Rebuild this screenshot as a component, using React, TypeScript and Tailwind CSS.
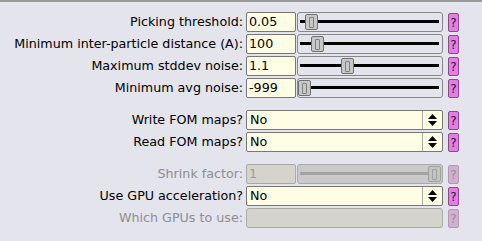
type SliderRow = { label: string; value: string; pos: number };

const sliders: SliderRow[] = [
  { label: "Picking threshold:", value: "0.05", pos: 7 },
  { label: "Minimum inter-particle distance (A):", value: "100", pos: 13 },
  { label: "Maximum stddev noise:", value: "1.1", pos: 43 },
  { label: "Minimum avg noise:", value: "-999", pos: 0 },
];

const font = { fontFamily: '"DejaVu Sans", sans-serif' };

// ヘルプボタン
const Help = ({ disabled = false }: { disabled?: boolean }) => (
  <div
    className={`ml-[5px] w-[11px] h-[19px] mt-[1px] rounded-[2px] border flex items-center justify-center text-[12px] leading-none ${
      disabled ? "bg-[#cfb0cf] border-[#b49ab4] text-[#9a8a9a]" : "bg-[#e77ce7] border-[#8a4a8a] text-[#1a1a3a]"
    }`}
  >
    ?
  </div>
);

const Label = ({ text, disabled = false }: { text: string; disabled?: boolean }) => (
  <div className={`w-[246px] pr-[3px] text-right text-[12.7px] ${disabled ? "text-[#8e8e8e]" : "text-black"}`}>{text}</div>
);

const Knob = ({ left, disabled = false }: { left: number; disabled?: boolean }) => (
  <div
    className={`absolute top-[1px] w-[13px] h-[16px] rounded-[2px] border flex items-center justify-center ${
      disabled ? "bg-[#c4c4c4] border-[#a0a0a0]" : "bg-[#c8c8c8] border-[#707070]"
    }`}
    style={{ left }}
  >
    <div className={`w-[5px] h-[11px] rounded-[1px] border ${disabled ? "border-[#a0a0a0]" : "border-[#808080]"}`} />
  </div>
);

const Slider = ({ row }: { row: SliderRow }) => (
  <div className="flex items-center h-[20px]">
    <Label text={row.label} />
    <div className="w-[50px] h-[20px] bg-[#fffee4] border border-[#777] rounded-[2px] px-[2px] text-[12.7px] leading-[18px]">
      {row.value}
    </div>
    <div className="relative ml-[1px] w-[146px] h-[20px] border border-[#888] rounded-[3px] bg-[#e4e4ec]">
      <div className="absolute left-[2px] right-[3px] top-[7px] h-[3px] bg-black" />
      <Knob left={row.pos} />
    </div>
    <Help />
  </div>
);

const Choice = ({ label, value }: { label: string; value: string }) => (
  <div className="flex items-center h-[20px]">
    <Label text={label} />
    <div className="flex w-[197px] h-[20px] bg-[#fffee4] border border-[#777] rounded-[2px]">
      <div className="flex-1 px-[3px] text-[12.7px] leading-[18px]">{value}</div>
      <div className="w-[20px] border-l border-[#aaa] flex flex-col items-center justify-center gap-[2px]">
        <svg width="9" height="5" viewBox="0 0 9 5"><path d="M0 5 L4.5 0 L9 5 Z" fill="#000" /></svg>
        <svg width="9" height="5" viewBox="0 0 9 5"><path d="M0 0 L4.5 5 L9 0 Z" fill="#000" /></svg>
      </div>
    </div>
    <Help />
  </div>
);

export default function App() {
  return (
    <div className="w-[482px] h-[241px] bg-[#e4e4ec] border-t-2 border-[#9a9a9a] pt-[10px] flex flex-col" style={font}>
      <div className="flex flex-col gap-[2px]">
        {sliders.map((s) => (
          <Slider key={s.label} row={s} />
        ))}
      </div>

      <div className="flex flex-col gap-[2px] mt-[12px]">
        <Choice label="Write FOM maps?" value="No" />
        <Choice label="Read FOM maps?" value="No" />
      </div>

      <div className="flex flex-col gap-[2px] mt-[12px]">
        {/* 無効状態のスライダー */}
        <div className="flex items-center h-[20px]">
          <Label text="Shrink factor:" disabled />
          <div className="w-[50px] h-[20px] bg-[#d4d4cc] border border-[#aaa] rounded-[2px] px-[2px] text-[12.7px] leading-[18px] text-[#9a9a9a]">
            1
          </div>
          <div className="relative ml-[1px] w-[146px] h-[20px] border border-[#aaa] rounded-[3px] bg-[#cacaca]">
            <div className="absolute left-[2px] right-[3px] top-[7px] h-[3px] bg-[#a4a4a4]" />
            <Knob left={130} disabled />
          </div>
          <Help disabled />
        </div>
        <Choice label="Use GPU acceleration?" value="No" />
        <div className="flex items-center h-[20px]">
          <Label text="Which GPUs to use:" disabled />
          <div className="w-[197px] h-[20px] bg-[#d4d4cc] border border-[#aaa] rounded-[3px]" />
          <Help disabled />
        </div>
      </div>
    </div>
  );
}
